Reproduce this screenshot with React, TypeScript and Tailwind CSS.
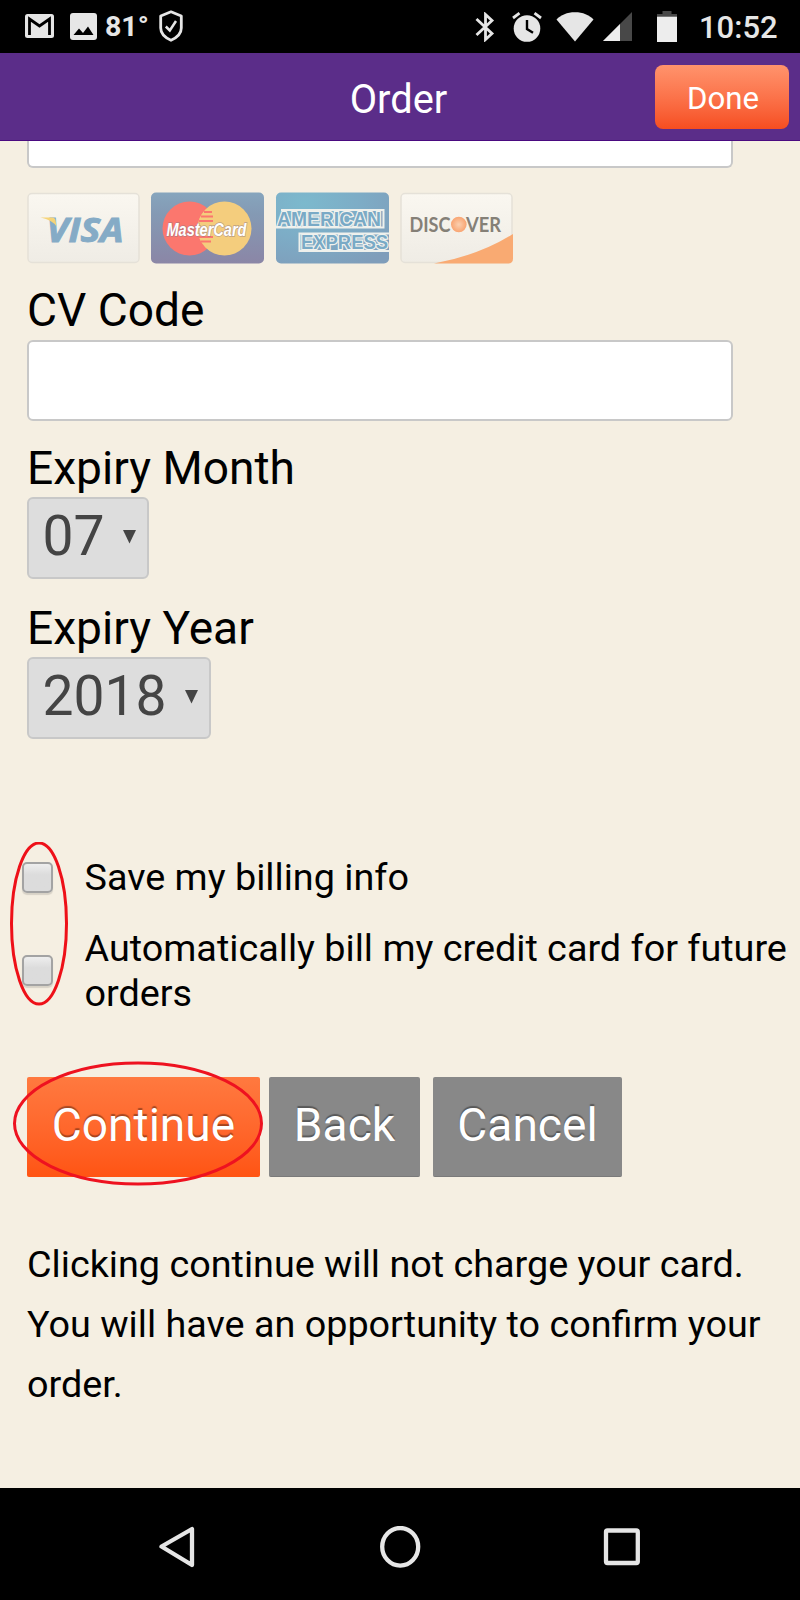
import { ReactNode } from "react";

export default function App() {
  return (
    <div className="relative flex h-[1600px] w-[800px] flex-col overflow-hidden bg-[#f5efe2] font-[Roboto,sans-serif] text-black">
      <StatusBar />
      <header className="grid h-[88px] grid-cols-[1fr_auto_1fr] items-center border-b border-[#4a0a80] bg-[#5b2d89] pr-[11px] pl-2">
        <div />
        <h1 className="pt-[7px] text-[39.8px] leading-[48px] text-white">Order</h1>
        <button className="mt-px h-16 w-[134px] justify-self-end rounded-lg bg-linear-to-b from-[#ff936c] to-[#f64d1f] pt-[3px] pl-0.5 text-[31.2px] leading-[61px] text-white">Done</button>
      </header>

      <main className="flex flex-1 flex-col pl-[27px]">
        <div className="h-[27px] w-[706px] rounded-b-md border-2 border-t-0 border-[#c8c8c8] bg-white" />
        <div className="mt-6 flex gap-[11.3px]">
          <Visa />
          <MasterCard />
          <Amex />
          <Discover />
        </div>

        <Label className="mt-[21px]">CV Code</Label>
        <input className="mt-[5px] h-[81px] w-[706px] rounded-md border-2 border-[#c8c8c8] bg-white px-4 text-[40px]" />

        <Label className="mt-[22px]">Expiry Month</Label>
        <Select value="07" className="w-[122px]" />

        <Label className="mt-6">Expiry Year</Label>
        <Select value="2018" className="w-[184px]" />

        <div className="mt-[116px] flex flex-col gap-[27px]">
          <CheckRow>Save my billing info</CheckRow>
          <CheckRow>Automatically bill my credit card for future orders</CheckRow>
        </div>

        <div className="mt-[62px] flex text-[46.1px] leading-[95px] text-white">
          <button className="h-[100px] w-[233px] rounded-xs bg-linear-to-b from-[#ff793f] to-[#ff5412] pb-[3px] [text-shadow:0_-2px_1px_rgba(0,0,0,0.35)]">Continue</button>
          <button className="ml-[9px] h-[100px] w-[151px] rounded-xs border-b border-[#7a7a7a] bg-[#888] pb-0.5 [text-shadow:0_-2px_1px_rgba(0,0,0,0.35)]">Back</button>
          <button className="ml-[13px] h-[100px] w-[189px] rounded-xs border-b border-[#7a7a7a] bg-[#888] pb-0.5 [text-shadow:0_-2px_1px_rgba(0,0,0,0.35)]">Cancel</button>
        </div>

        <p className="mt-[57px] w-[750px] text-[37.75px] leading-[60px]">
          Clicking continue will not charge your card. You will have an opportunity to confirm your order.
        </p>
      </main>

      <NavBar />

      {/* hand drawn highlights over the form */}
      <svg className="pointer-events-none absolute top-[842px] left-[10px]" width="58" height="164" fill="none" stroke="#ee1018" strokeWidth="3">
        <ellipse cx="29" cy="81.5" rx="27.5" ry="80.5" />
      </svg>
      <svg className="pointer-events-none absolute top-[1061px] left-[12px]" width="252" height="126" fill="none" stroke="#ee1220" strokeWidth="3">
        <ellipse cx="126" cy="62.5" rx="123.5" ry="60.5" />
      </svg>
    </div>
  );
}

function StatusBar() {
  return (
    <div className="flex h-[53px] shrink-0 items-start bg-black text-[#e6e6e6]">
      <svg className="mt-3.5 ml-[25px]" width="29" height="24" viewBox="0 0 29 24">
        <rect width="29" height="24" rx="2.5" fill="#e6e6e6" />
        <path d="M4.5 21V5L14.5 12l10-7V21" fill="none" stroke="#000" strokeWidth="2.8" />
      </svg>
      <svg className="mt-[13px] ml-4" width="27" height="27" viewBox="0 0 27 27">
        <rect width="27" height="27" rx="3" fill="#e6e6e6" />
        <path d="M3.5 22l5.5-6.5 4 4.5 5-6.5L23.5 22z" fill="#000" />
      </svg>
      <span className="mt-[9px] ml-[8px] w-[45px] text-[28.5px] leading-9 font-bold">81°</span>
      <svg className="mt-[10px] ml-[9px]" width="24" height="32" viewBox="0 0 24 32" fill="none" stroke="#e6e6e6">
        <path d="M12 1.8L22.3 6v12c0 5.5-3 9-10.3 12.3C4.7 27 1.7 23.5 1.7 18V6z" strokeWidth="2.8" strokeLinejoin="round" />
        <path d="M6.8 16.5l4 4L17 11" strokeWidth="2.5" />
      </svg>

      <svg className="mt-3 ml-[292px]" width="20" height="30" viewBox="0 0 20 30" fill="none" stroke="#e6e6e6" strokeWidth="2.8">
        <path d="M1.5 7L17 21.5l-6.5 6V2.5l6.5 6L1.5 23" />
      </svg>
      <svg className="mt-3 ml-[17px]" width="30" height="30" viewBox="0 0 30 30">
        <circle cx="15" cy="16.5" r="13.3" fill="#e6e6e6" />
        <path d="M15 8v9l6 3.8" fill="none" stroke="#000" strokeWidth="2.4" />
        <path d="M1 6l6.5-4.8M29 6l-6.5-4.8" stroke="#e6e6e6" strokeWidth="2.8" />
      </svg>
      <svg className="mt-3 ml-[14px]" width="38" height="30" viewBox="0 0 38 30">
        <path d="M19 29.5L.5 7.5C5 3 11 .3 19 .3S33 3 37.5 7.5z" fill="#e6e6e6" />
      </svg>
      <svg className="mt-3 ml-[9px]" width="29" height="29" viewBox="0 0 29 29">
        <path d="M0 29L29 0v29z" fill="#484848" />
        <path d="M0 29L17 12v17z" fill="#ededed" />
      </svg>
      <svg className="mt-[11px] ml-[25px]" width="20" height="31" viewBox="0 0 20 31">
        <path d="M0 5V3h5.5V0h9v3H20v2z" fill="#484848" />
        <path d="M0 5.5h20V31H0z" fill="#ededed" />
      </svg>
      <span className="mt-2.5 ml-[22px] text-[31px] leading-9 font-medium">10:52</span>
    </div>
  );
}

function Label({ children, className }: { children: ReactNode; className: string }) {
  return <label className={`${className} block text-[46.1px] leading-[50px]`}>{children}</label>;
}

function Select({ value, className }: { value: string; className: string }) {
  return (
    <div className={`${className} mt-1 flex h-[82px] justify-between rounded-md border-2 border-[#c8c8c8] bg-[#ddd] pr-[11px] pl-[13.5px] text-[#444]`}>
      <span className="text-[55.2px] leading-[74px]">{value}</span>
      <svg className="mt-[31px]" width="13" height="14" viewBox="0 0 13 14">
        <path d="M0 0h13L6.5 13.5z" fill="#444" />
      </svg>
    </div>
  );
}

function CheckRow({ children }: { children: ReactNode }) {
  return (
    <div className="-ml-[5px] flex items-center">
      <span className="h-[31px] w-[31px] shrink-0 rounded-[5px] border-2 border-[#a3a3a3] bg-linear-to-b from-[#eee] to-[#dcdcdc] to-40% shadow-[0_2px_1px_rgba(0,0,0,0.12)]" />
      <span className="ml-[31.5px] text-[37.75px] leading-[44.4px]">{children}</span>
    </div>
  );
}

function Visa() {
  return (
    <svg width="113" height="72" viewBox="0 0 113 72">
      <defs>
        <linearGradient id="paper" x2="0" y2="1">
          <stop stopColor="#faf7f0" />
          <stop offset="1" stopColor="#efece5" />
        </linearGradient>
      </defs>
      <rect x="1" y="1.5" width="111" height="69" rx="4" fill="url(#paper)" stroke="#e5e1d8" strokeWidth="1.5" />
      <text x="19.5" y="49.5" textLength="77" lengthAdjust="spacingAndGlyphs" fontFamily="Open Sans" fontWeight="bold" fontStyle="italic" fontSize="34" fill="#85abc6" stroke="#85abc6" strokeWidth="1">VISA</text>
      <path d="M13.500 25.500H25q3 0 3.500 3l1 6q-4-6.500-16-9z" fill="#f6d477" />
    </svg>
  );
}

function MasterCard() {
  return (
    <svg className="overflow-visible" width="113" height="72" viewBox="0 0 113 72">
      <defs>
        <linearGradient id="mc" x2="0" y2="1">
          <stop stopColor="#86a5bd" />
          <stop offset=".3" stopColor="#849ab4" />
          <stop offset="1" stopColor="#8b86a6" />
        </linearGradient>
      </defs>
      <rect y=".5" width="113" height="71" rx="5" fill="url(#mc)" />
      <circle cx="38.5" cy="36.5" r="27" fill="#fb776e" />
      <circle cx="73.5" cy="36.5" r="27" fill="#f4cd7d" />
      <path d="M53 20h8M50 24.5h12M48 29h14M48 45h14M50 49.5h10" stroke="#fb776e" strokeWidth="2" />
      <text x="15.5" y="43.5" textLength="80" lengthAdjust="spacingAndGlyphs" fontFamily="Liberation Sans" fontWeight="bold" fontStyle="italic" fontSize="18.5" fill="#fff" stroke="#8b7686" strokeOpacity=".55" strokeWidth="1.5" paintOrder="stroke">MasterCard</text>
    </svg>
  );
}

function Amex() {
  return (
    <svg className="overflow-visible" width="113" height="72" viewBox="0 0 113 72">
      <defs>
        <radialGradient id="amex" cx=".25" cy=".15" r="1">
          <stop stopColor="#7cb9cd" />
          <stop offset=".5" stopColor="#7dacc6" />
          <stop offset="1" stopColor="#7f9dba" />
        </radialGradient>
      </defs>
      <rect y=".5" width="113" height="71" rx="5" fill="url(#amex)" />
      <path d="M0 35.5h107.5V18H5" fill="none" stroke="#eef0ec" strokeWidth="2" />
      <path d="M113 59H23.5V41.5H113" fill="none" stroke="#eef0ec" strokeWidth="2" />
      <g fontFamily="Liberation Sans" fontWeight="bold" fontSize="20" fill="#79aac6" stroke="#f1f2ee" strokeWidth="2.6" paintOrder="stroke">
        <text x="1" y="33.5" textLength="104" lengthAdjust="spacingAndGlyphs">AMERICAN</text>
        <text x="25" y="57" textLength="87" lengthAdjust="spacingAndGlyphs">EXPRESS</text>
      </g>
    </svg>
  );
}

function Discover() {
  return (
    <svg width="113" height="72" viewBox="0 0 113 72">
      <defs>
        <radialGradient id="ball">
          <stop stopColor="#fbd0b0" />
          <stop offset="1" stopColor="#f9a471" />
        </radialGradient>
      </defs>
      <rect x="1" y="1.5" width="111" height="69" rx="4" fill="url(#paper)" stroke="#e5e1d8" strokeWidth="1.5" />
      <path d="M34 71.5Q80 63 113 42v24.5q0 5-5 5z" fill="#f9aa72" />
      <g fontFamily="Lato" fontWeight="bold" fontSize="20.5" fill="#858077">
        <text x="9.5" y="39.5" textLength="41" lengthAdjust="spacingAndGlyphs">DISC</text>
        <text x="66" y="39.5" textLength="35" lengthAdjust="spacingAndGlyphs">VER</text>
      </g>
      <circle cx="58.8" cy="32.5" r="7.8" fill="url(#ball)" />
    </svg>
  );
}

function NavBar() {
  return (
    <nav className="flex h-28 shrink-0 bg-black pt-[38px]">
      <svg className="ml-[159px]" width="38" height="44" viewBox="0 0 38 44">
        <path d="M33 3v36L2.5 20.500z" fill="none" stroke="#e6e6e6" strokeWidth="4.3" strokeLinejoin="round" />
      </svg>
      <svg className="ml-[182px]" width="42" height="44" viewBox="0 0 42 44">
        <ellipse cx="21.2" cy="20.8" rx="18" ry="18.8" fill="none" stroke="#e6e6e6" strokeWidth="4.3" />
      </svg>
      <svg className="ml-[182px]" width="38" height="44" viewBox="0 0 38 44">
        <rect x="3" y="4.5" width="31.8" height="32.5" rx="1.5" fill="none" stroke="#e6e6e6" strokeWidth="4.3" />
      </svg>
    </nav>
  );
}
